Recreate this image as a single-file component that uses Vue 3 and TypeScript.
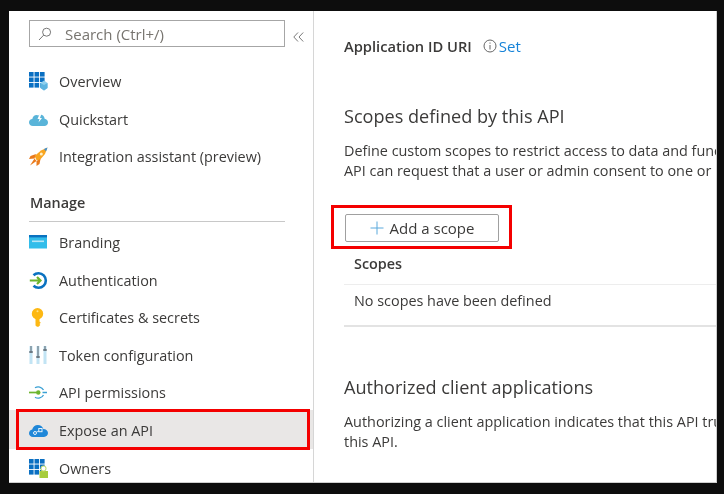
<script setup lang="ts">
interface NavItem { label: string; icon: string; active?: boolean }
const topItems: NavItem[] = [
  { label: 'Overview', icon: 'overview' },
  { label: 'Quickstart', icon: 'quick' },
  { label: 'Integration assistant (preview)', icon: 'rocket' },
]
const manageItems: NavItem[] = [
  { label: 'Branding', icon: 'brand' },
  { label: 'Authentication', icon: 'auth' },
  { label: 'Certificates & secrets', icon: 'key' },
  { label: 'Token configuration', icon: 'token' },
  { label: 'API permissions', icon: 'perm' },
  { label: 'Expose an API', icon: 'expose', active: true },
  { label: 'Owners', icon: 'owners' },
]
const grid = [0, 5.5, 11]
</script>

<template>
  <div class="frame">
    <div class="card">
      <aside class="sidebar">
        <div class="search-row">
          <div class="search">
            <svg class="search-icon" width="14" height="14" viewBox="0 0 14 14" fill="none" stroke="#777" stroke-width="1">
              <circle cx="8.6" cy="5.2" r="4" />
              <path d="M5.7 8.1 1 13" />
            </svg>
            <span>Search (Ctrl+/)</span>
          </div>
          <svg class="collapse" width="11" height="10" viewBox="0 0 11 10" fill="none" stroke="#7a7a7a" stroke-width="1">
            <path d="M5 .5.8 5 5 9.500M10.200.5 6 5l4.200 4.500" />
          </svg>
        </div>

        <template v-for="group in [topItems, manageItems]" :key="group[0].label">
          <div v-if="group === manageItems" class="section">Manage</div>
          <ul class="nav" :class="{ first: group === topItems }">
            <li v-for="item in group" :key="item.label" class="row" :class="{ active: item.active }">
              <svg class="icon" width="19" height="19" viewBox="0 0 19 19">
                <g v-if="item.icon === 'overview'">
                  <g v-for="x in grid" :key="x">
                    <rect v-for="y in grid" :key="y" :x="x" :y="y" width="4.6" height="4.6" fill="#0a6fc2" />
                  </g>
                  <path d="M11.500 11 15 8.500l3.500 2.500v5l-3.500 2.500-3.500-2.500z" fill="#8fd0ee" />
                  <path d="M11.500 11l3.500 2 3.500-2v5l-3.500 2.500-3.500-2.500z" fill="#5db4e0" />
                </g>
                <g v-else-if="item.icon === 'quick'">
                  <path d="M4 16C1.500 16 0 14.300 0 12.500 0 10.500 1.500 9 3.300 9 3.800 6.500 5.500 5 7.500 5c.8 0 1.500.2 2 .6C10.500 4.500 12 4 13 5c1.500.5 2.500 2 2.600 3.800 1.900.2 3.400 1.700 3.400 3.600 0 2-1.600 3.600-3.600 3.600z" fill="#59b4d9" />
                  <path d="M10.800 3.500 8.500 9h2l-1 3.500L13 8h-2l1.500-4.500z" fill="#fff" />
                </g>
                <g v-else-if="item.icon === 'rocket'">
                  <path d="M5.500 9 12 3.500 18.500.5 16 7 10 14 7.500 13z" fill="#f9a51f" />
                  <path d="M15 2 18.500.5 17 4.500z" fill="#3a8fd6" />
                  <circle cx="12.300" cy="7" r="1.500" fill="#fdf0c8" />
                  <path d="M7 7 1.500 9 0 12 5.500 11.500zM11.500 12 10.500 17 7.500 19 7.500 14zM5.500 11.500 7.500 14 1 18.500z" fill="#ea7b1c" />
                </g>
                <g v-else-if="item.icon === 'brand'">
                  <rect x="0" y="2" width="18" height="13.500" fill="#32bdea" />
                  <rect x="0" y="2" width="18" height="2.400" fill="#0a72c0" />
                  <rect x="3" y="7.500" width="12" height="1.600" fill="#b9e6f6" />
                </g>
                <g v-else-if="item.icon === 'auth'">
                  <path d="M4.500 4.200A7.300 7.300 0 1 1 4.500 14.800" fill="none" stroke="#0a72c0" stroke-width="2.600" />
                  <path d="M.8 9.500H11M8 6l3.500 3.500L8 13" fill="none" stroke="#6db52e" stroke-width="2.200" />
                </g>
                <g v-else-if="item.icon === 'key'">
                  <circle cx="8.500" cy="5.700" r="5.700" fill="#fdb813" />
                  <path d="M6.500 8h4v5.500l1.300 1.300-1.300 1.200 .8 1-1.800 1.700H8L6.500 17.500z" fill="#fdb813" />
                  <circle cx="8.500" cy="3.300" r="1" fill="#ffe38a" />
                </g>
                <g v-else-if="item.icon === 'token'">
                  <path d="M2 0v18M9 0v18M16 0v18" stroke="#c2e4f4" stroke-width="3" />
                  <path d="M2 0v5M9 0v10M16 0v3" stroke="#7d8d98" stroke-width="1.500" />
                  <rect x=".300" y="5" width="3.400" height="2" fill="#6c7a84" />
                  <rect x="7.300" y="10" width="3.400" height="2" fill="#6c7a84" />
                  <rect x="14.300" y="3" width="3.400" height="2" fill="#6c7a84" />
                </g>
                <g v-else-if="item.icon === 'perm'">
                  <path d="M6 4.800a6 6 0 0 1 8.500 2.200M6 14.200a6 6 0 0 0 8.500-2.200" fill="none" stroke="#3aa0d4" stroke-width="1.300" />
                  <path d="M13.500 9.500H18" stroke="#3aa0d4" stroke-width="1.500" />
                  <path d="M0 9.500h9" stroke="#6db52e" stroke-width="1.700" />
                  <circle cx="9.300" cy="9.500" r="2.200" fill="#6db52e" />
                </g>
                <g v-else-if="item.icon === 'expose'">
                  <path d="M4 16C1.600 16 0 14.300 0 12.300 0 10.300 1.400 8.800 3.200 8.500 3.800 5.800 6.100 4 8.800 4c2.600 0 4.700 1.600 5.500 4 2.700 0 4.700 1.800 4.700 4.100 0 2.200-1.700 3.900-4 3.900z" fill="#1f87d8" />
                  <circle cx="6" cy="12" r="1.500" fill="none" stroke="#e6f2fb" stroke-width="1" />
                  <rect x="9.800" y="7.500" width="3.200" height="3.200" fill="none" stroke="#e6f2fb" stroke-width="1" />
                  <path d="M7.200 11.200 10 10" stroke="#e6f2fb" stroke-width=".8" />
                </g>
                <g v-else-if="item.icon === 'owners'">
                  <g v-for="x in grid" :key="x">
                    <rect v-for="y in grid" :key="y" :x="x" :y="y" width="4.600" height="4.600" fill="#0a6fc2" />
                  </g>
                  <rect x="10.500" y="12" width="8.500" height="7" fill="#a6cc3c" />
                  <circle cx="14.500" cy="9.500" r="3" fill="#c3dc78" />
                  <circle cx="14.500" cy="9.500" r="1.900" fill="#fff" />
                </g>
              </svg>
              <span class="label">{{ item.label }}</span>
              <i v-if="item.active" class="red-box nav-box"></i>
            </li>
          </ul>
        </template>
      </aside>

      <main class="content">
        <div class="uri">
          <strong>Application ID URI</strong>
          <svg class="info" width="14" height="14" viewBox="0 0 14 14" fill="none" stroke="#666" stroke-width="1">
            <circle cx="7" cy="7" r="6" />
            <path d="M7 6v4.500M7 3.500v1.200" />
          </svg>
          <a class="link">Set</a>
        </div>

        <h2 class="scopes-title">Scopes defined by this API</h2>
        <p class="desc">Define custom scopes to restrict access to data and functionality protected by the API. An application that requires access to parts of this<br />API can request that a user or admin consent to one or more of these.</p>

        <div class="button-wrap">
          <button class="add" type="button">
            <svg width="14" height="14" viewBox="0 0 14 14" stroke="#5aa9dc" stroke-width="1">
              <path d="M7 .5v13M.5 7h13" />
            </svg>
            <span>Add a scope</span>
          </button>
          <i class="red-box button-box"></i>
        </div>

        <div class="table-head">Scopes</div>
        <div class="table-cell">No scopes have been defined</div>

        <h2 class="auth-title">Authorized client applications</h2>
        <p class="desc">Authorizing a client application indicates that this API trusts the application and users should not be asked to consent when the client calls<br />this API.</p>
      </main>
    </div>
  </div>
</template>

<style scoped>
.frame {
  width: 724px;
  height: 494px;
  box-sizing: border-box;
  padding: 11px 7px 11px 9px;
  background: #0d0d0d;
  overflow: hidden;
}
.card {
  display: flex;
  height: 100%;
  background: #fff;
  border-right: 1px solid #cfcfcf;
  border-bottom: 1px solid #cfcfcf;
  box-sizing: border-box;
  overflow: hidden;
  font-family: "Open Sans", "Noto Sans", sans-serif;
  color: #3b3a39;
  font-size: 14.4px;
  filter: blur(0.35px);
}
.sidebar {
  flex: none;
  width: 305px;
  box-sizing: border-box;
  border-right: 1px solid #d6d6d6;
  padding-top: 9px;
  isolation: isolate;
}
.search-row {
  display: flex;
  align-items: flex-start;
  margin-left: 20px;
}
.search {
  display: flex;
  align-items: center;
  box-sizing: border-box;
  width: 256px;
  height: 27px;
  border: 1px solid #a6a6a6;
  padding-left: 8px;
  color: #77746f;
  font-size: 15px;
}
.search-icon { margin-right: 13px; flex: none; }
.collapse { margin: 12px 0 0 8px; }
.nav {
  list-style: none;
  margin: 0;
  padding: 0;
}
.nav.first { margin-top: 16px; }
.row {
  position: relative;
  display: flex;
  align-items: center;
  height: 37.6px;
  padding-left: 20px;
  white-space: nowrap;
}
.row.active::before {
  content: "";
  position: absolute;
  z-index: -1;
  left: 0;
  right: 0;
  top: -2px;
  height: 39px;
  background: #e9e7e6;
}
.icon { flex: none; margin-right: 11px; }
.section {
  margin: 17px 28px 2px 20px;
  padding-left: 1px;
  padding-bottom: 8px;
  border-bottom: 1px solid #c8c8c8;
  font-weight: 600;
  line-height: 20px;
  height: 20px;
}
.red-box {
  position: absolute;
  box-sizing: border-box;
  border: 3px solid #f40000;
  pointer-events: none;
}
.nav-box { left: 7px; top: -3px; width: 294px; height: 41px; }
.content {
  flex: 1;
  min-width: 0;
  padding: 25px 0 0 30px;
  overflow: hidden;
  white-space: nowrap;
}
.uri {
  display: flex;
  align-items: center;
  height: 20px;
}
.uri strong { font-weight: 600; font-size: 14.7px; }
.info { margin-left: 11px; margin-right: 2px; }
.link { color: #1683d8; font-size: 15px; }
h2 {
  margin: 0;
  font-weight: 400;
  font-size: 18.1px;
  line-height: 24px;
}
.scopes-title { margin-top: 48px; }
.desc {
  margin: 0;
  line-height: 20px;
}
.scopes-title + .desc { margin-top: 13px; }
.button-wrap {
  position: relative;
  margin-top: 33px;
  margin-left: 1px;
  width: 154px;
}
.add {
  display: flex;
  align-items: center;
  justify-content: center;
  gap: 6px;
  box-sizing: border-box;
  width: 154px;
  height: 28px;
  padding: 0;
  background: #fff;
  border: 1px solid #a0a0a0;
  border-radius: 2px;
  font: inherit;
  font-size: 15px;
  color: #3b3a39;
}
.button-box { left: -14px; top: -9px; width: 181px; height: 44px; }
.table-head {
  box-sizing: border-box;
  height: 43px;
  padding: 12px 0 0 10px;
  line-height: 20px;
  font-weight: 600;
  border-bottom: 1px solid #ededed;
}
.table-cell {
  box-sizing: border-box;
  height: 42px;
  line-height: 20px;
  padding: 6px 0 0 10px;
  border-bottom: 2px solid #e3e3e3;
}
.auth-title { margin-top: 48px; }
.auth-title + .desc { margin-top: 13px; }
</style>

<style>
html, body { background: #0d0d0d; }
</style>
